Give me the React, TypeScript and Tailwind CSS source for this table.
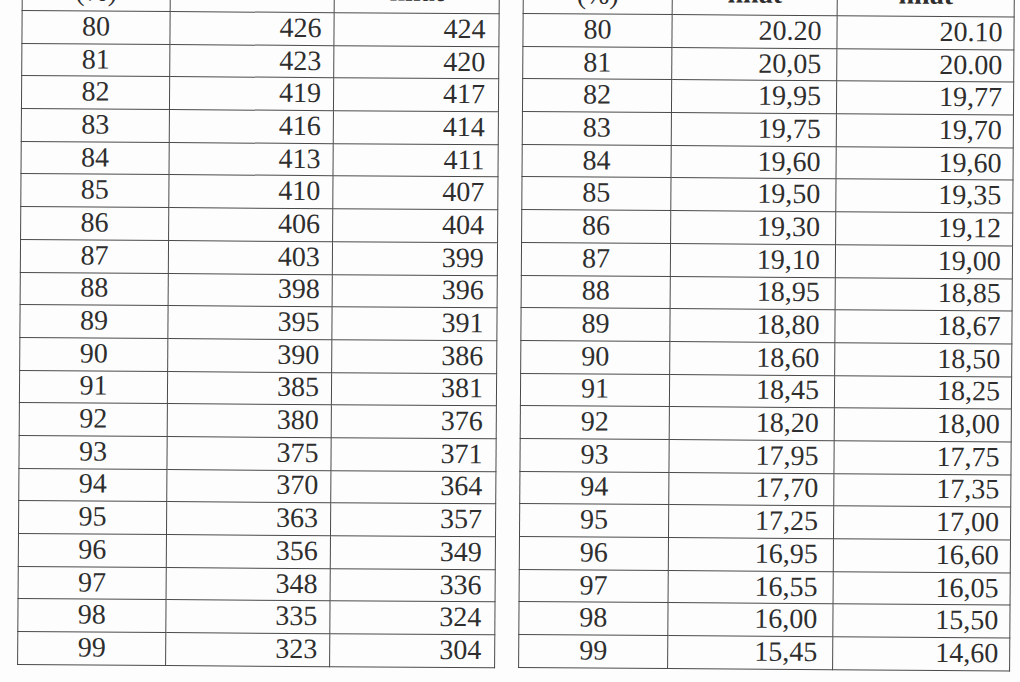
import React from 'react'

const left: [string, string, string][] = [
  ['80', '426', '424'],
  ['81', '423', '420'],
  ['82', '419', '417'],
  ['83', '416', '414'],
  ['84', '413', '411'],
  ['85', '410', '407'],
  ['86', '406', '404'],
  ['87', '403', '399'],
  ['88', '398', '396'],
  ['89', '395', '391'],
  ['90', '390', '386'],
  ['91', '385', '381'],
  ['92', '380', '376'],
  ['93', '375', '371'],
  ['94', '370', '364'],
  ['95', '363', '357'],
  ['96', '356', '349'],
  ['97', '348', '336'],
  ['98', '335', '324'],
  ['99', '323', '304'],
]

const right: [string, string, string][] = [
  ['80', '20.20', '20.10'],
  ['81', '20,05', '20.00'],
  ['82', '19,95', '19,77'],
  ['83', '19,75', '19,70'],
  ['84', '19,60', '19,60'],
  ['85', '19,50', '19,35'],
  ['86', '19,30', '19,12'],
  ['87', '19,10', '19,00'],
  ['88', '18,95', '18,85'],
  ['89', '18,80', '18,67'],
  ['90', '18,60', '18,50'],
  ['91', '18,45', '18,25'],
  ['92', '18,20', '18,00'],
  ['93', '17,95', '17,75'],
  ['94', '17,70', '17,35'],
  ['95', '17,25', '17,00'],
  ['96', '16,95', '16,60'],
  ['97', '16,55', '16,05'],
  ['98', '16,00', '15,50'],
  ['99', '15,45', '14,60'],
]

const cell = 'border-[1.5px] border-[#4a4a4a] h-[32.7px] p-0 leading-none align-middle'

function DataTable({
  rows,
  widths,
  heads,
  pads,
}: {
  rows: [string, string, string][]
  widths: [string, string, string]
  heads: [string, string, string]
  pads: [string, string]
}) {
  return (
    <table className="border-collapse table-fixed rotate-[0.4deg] origin-top-left">
      <colgroup>
        <col className={widths[0]} />
        <col className={widths[1]} />
        <col className={widths[2]} />
      </colgroup>
      <thead>
        <tr>
          <th className="border-[1.5px] border-[#4a4a4a] h-[50px] align-bottom pb-[5px] font-normal leading-none">
            {heads[0]}
          </th>
          <th className="border-[1.5px] border-[#4a4a4a] h-[50px] align-bottom pb-[7px] font-bold leading-none">
            {heads[1]}
          </th>
          <th className="border-[1.5px] border-[#4a4a4a] h-[50px] align-bottom pb-[7px] font-bold leading-none">
            {heads[2]}
          </th>
        </tr>
      </thead>
      <tbody>
        {rows.map((r) => (
          <tr key={r[0]}>
            <td className={`${cell} text-center pb-[2px]`}>{r[0]}</td>
            <td className={`${cell} text-right pb-[2px] ${pads[0]}`}>{r[1]}</td>
            <td className={`${cell} text-right pb-[2px] ${pads[1]}`}>{r[2]}</td>
          </tr>
        ))}
      </tbody>
    </table>
  )
}

export default function App() {
  return (
    <div className="w-[1020px] h-[682px] overflow-hidden bg-[#fdfdfd] text-[#2e2e2e] [font-family:'Liberation_Serif',serif] text-[28px]">
      <div className="flex items-start pl-[22px] gap-[23px]">
        <div className="-mt-[40.5px]">
          <DataTable
            rows={left}
            widths={['w-[148px]', 'w-[164px]', 'w-[165px]']}
            heads={['(%)', '', 'nhất']}
            pads={['pr-[12px]', 'pr-[13px]']}
          />
        </div>
        <div className="-mt-[37px]">
          <DataTable
            rows={right}
            widths={['w-[149px]', 'w-[165px]', 'w-[177px]']}
            heads={['(%)', 'nhất', 'nhất']}
            pads={['pr-[15px]', 'pr-[11px]']}
          />
        </div>
      </div>
    </div>
  )
}
